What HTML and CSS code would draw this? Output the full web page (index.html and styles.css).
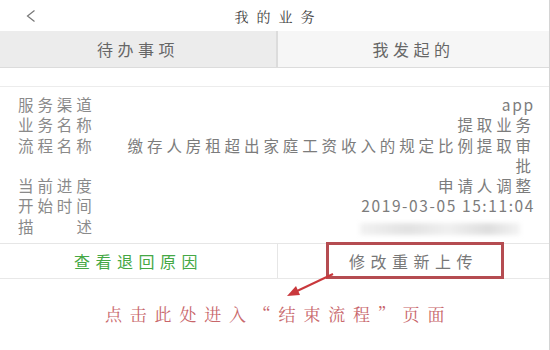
FILE: index.html
```html
<!DOCTYPE html>
<html lang="zh">
<head>
<meta charset="utf-8">
<link rel="stylesheet" href="styles.css">
</head>
<body>
<div class="app">
  <div class="header">
    <svg class="back" width="10" height="14" viewBox="0 0 10 14"><polyline points="8.5,1.5 1.5,7 8.5,12.5" fill="none" stroke="#777" stroke-width="1.2"/></svg>
    <div class="title">我的业务</div>
  </div>
  <div class="tabs">
    <div class="tab active">待办事项</div>
    <div class="tab">我发起的</div>
  </div>
  <div class="spacer"></div>
  <div class="info">
    <div class="row"><span class="label">服务渠道</span><span class="value latin">app</span></div>
    <div class="row"><span class="label">业务名称</span><span class="value">提取业务</span></div>
    <div class="row"><span class="label">流程名称</span><span class="value">缴存人房租超出家庭工资收入的规定比例提取审批</span></div>
    <div class="row"><span class="label">当前进度</span><span class="value">申请人调整</span></div>
    <div class="row"><span class="label">开始时间</span><span class="value date">2019-03-05 15:11:04</span></div>
    <div class="row"><span class="label split"><span>描</span><span>述</span></span><span class="value"><span class="blur"></span></span></div>
  </div>
  <div class="actions">
    <div class="action green">查看退回原因</div>
    <div class="action">修改重新上传</div>
  </div>
  <div class="note">点击此处进入“结束流程”页面</div>
  <div class="mark"></div>
  <svg class="arrow" width="60" height="40" viewBox="0 0 60 40">
    <line x1="52" y1="3" x2="14" y2="21" stroke="#c9383c" stroke-width="2"/>
    <polygon points="6,25 15,15 19,24" fill="#c9383c"/>
  </svg>
</div>
</body>
</html>
```
FILE: styles.css
```css
* { box-sizing: border-box; }
html, body { margin: 0; padding: 0; background: #fff; }
body { font-family: "Noto Sans CJK SC", "Liberation Sans", sans-serif; }
.app {
  position: relative;
  width: 550px;
  height: 350px;
  border-right: 1px solid #d4d4d4;
  overflow: hidden;
}
.header {
  position: relative;
  height: 31px;
  display: flex;
  align-items: center;
  justify-content: center;
}
.back { position: absolute; left: 26px; top: 9px; }
.title {
  font-family: "Noto Serif CJK SC", "Noto Sans CJK SC", serif;
  font-size: 14px;
  letter-spacing: 8px;
  margin-right: -8px;
  color: #444;
  padding-top: 1px;
}
.tabs {
  display: grid;
  grid-template-columns: 276px 1fr;
  height: 37px;
  border-bottom: 1px solid #dcdcdc;
}
.tab {
  display: flex;
  align-items: center;
  justify-content: center;
  font-size: 16px;
  letter-spacing: 4.5px;
  color: #666;
  background: #f6f6f6;
  border-left: 2px solid #dcdcdc;
}
.tab.active { background: #ececec; border-left: none; }
.spacer { height: 19px; border-bottom: 1px solid #ececec; }
.info {
  padding: 7px 14px 7px 18px;
  border-bottom: 1px solid #e6e6e6;
}
.row {
  display: flex;
  justify-content: space-between;
  gap: 30px;
  line-height: 20.3px;
  font-size: 15.5px;
  letter-spacing: 3.9px;
  color: #8a8a8a;
}
.label { flex: none; width: 78px; white-space: nowrap; }
.label.split { display: flex; justify-content: space-between; }
.value { flex: 1; text-align: right; color: #7c7c7c; }
.value.latin { letter-spacing: 1.8px; }
.value.date { letter-spacing: 1.6px; }
.blur {
  display: inline-block;
  width: 160px;
  height: 12px;
  margin-right: 15px;
  vertical-align: middle;
  background: linear-gradient(90deg, #f2f2f2 0%, #e2e2e2 30%, #f0f0f0 55%, #dedede 80%, #f4f4f4 100%);
  filter: blur(2px);
}
.actions {
  display: grid;
  grid-template-columns: 277px 1fr;
  height: 35px;
  border-bottom: 1px solid #e8e8e8;
}
.action {
  display: flex;
  align-items: center;
  justify-content: center;
  font-size: 16px;
  letter-spacing: 5.5px;
  color: #777;
  border-left: 1px solid #e6e6e6;
}
.action.green { color: #45a845; border-left: none; }
.note {
  padding: 22px 0 0 105px;
  font-family: "Noto Serif CJK SC", "Noto Sans CJK SC", serif;
  font-size: 17px;
  letter-spacing: 7.8px;
  color: #c8666a;
}
.mark {
  position: absolute;
  left: 326px;
  top: 242px;
  width: 178px;
  height: 37px;
  border: 3px solid #b54c51;
}
.arrow { position: absolute; left: 281px; top: 271px; }
```
